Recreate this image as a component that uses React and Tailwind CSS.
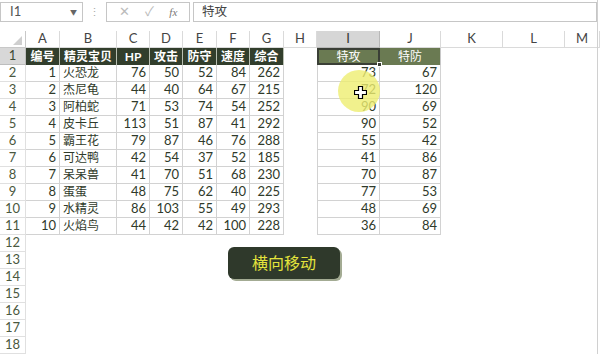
import React from 'react';

const cols = [
  { k: '', w: 26 },
  { k: 'A', w: 34 },
  { k: 'B', w: 57 },
  { k: 'C', w: 33 },
  { k: 'D', w: 33 },
  { k: 'E', w: 34 },
  { k: 'F', w: 33 },
  { k: 'G', w: 34 },
  { k: 'H', w: 33 },
  { k: 'I', w: 63 },
  { k: 'J', w: 61 },
  { k: 'K', w: 62 },
  { k: 'L', w: 62 },
  { k: 'M', w: 35 },
];

const head = ['编号', '精灵宝贝', 'HP', '攻击', '防守', '速度', '综合'];

const data = [
  [1, '火恐龙', 76, 50, 52, 84, 262, 73, 67],
  [2, '杰尼龟', 44, 40, 64, 67, 215, 72, 120],
  [3, '阿柏蛇', 71, 53, 74, 54, 252, 90, 69],
  [4, '皮卡丘', 113, 51, 87, 41, 292, 90, 52],
  [5, '霸王花', 79, 87, 46, 76, 288, 55, 42],
  [6, '可达鸭', 42, 54, 37, 52, 185, 41, 86],
  [7, '呆呆兽', 41, 70, 51, 68, 230, 70, 87],
  [8, '蛋蛋', 48, 75, 62, 40, 225, 77, 53],
  [9, '水精灵', 86, 103, 55, 49, 293, 48, 69],
  [10, '火焰鸟', 44, 42, 42, 100, 228, 36, 84],
];

const FONT = { fontFamily: 'Lato, "Noto Sans CJK SC", sans-serif' };

function FormulaBar() {
  return (
    <div className="h-[31px] flex items-start pt-[2px] text-[13px]">
      <div className="w-[83px] h-[20px] border border-[#c6c6c6] flex items-center justify-between pl-[9px] pr-[5px] text-[#555]">
        <span>I1</span>
        <span className="text-[7px] text-[#666]">▼</span>
      </div>
      <div className="w-[23px] h-[20px] flex items-center justify-center text-[#aaa] text-[11px]">⋮</div>
      <div className="w-[84px] h-[20px] border border-[#c6c6c6] flex items-center justify-around px-[4px] text-[#bbb]">
        <span className="text-[13px]">✕</span>
        <span className="text-[13px]">✓</span>
        <span className="text-[11px] italic text-[#777]" style={{ fontFamily: '"Liberation Serif", serif' }}>fx</span>
      </div>
      <div className="ml-[3px] w-[404px] h-[20px] border border-[#c6c6c6] flex items-center pl-[8px] text-[#444] text-[12.5px]">
        特攻
      </div>
    </div>
  );
}

function HeaderRow() {
  return (
    <>
      {cols.map((c, i) =>
        i === 0 ? (
          <div key={i} className="relative h-[17px] border-r border-b border-[#c8c8c8] bg-white">
            <div className="absolute right-[3px] bottom-[2px] w-0 h-0 border-l-[9px] border-l-transparent border-b-[9px] border-b-[#cfcfcf]" />
          </div>
        ) : (
          <div
            key={i}
            className={
              c.k === 'I'
                ? 'h-[17px] flex items-center justify-center bg-[#d6d6d6] border-r border-b border-[#b8b8b8] text-[#333] text-[13px]'
                : 'h-[17px] flex items-center justify-center bg-white border-r border-b border-[#dadada] text-[#444] text-[13px]'
            }
          >
            {c.k}
          </div>
        )
      )}
    </>
  );
}

function RowHead({ n }) {
  return (
    <div
      className={
        n === 1
          ? 'h-[17px] flex items-center justify-center bg-[#d8d8d8] border-r border-b border-[#bdbdbd] text-[#3c4a34] text-[13px]'
          : 'h-[17px] flex items-center justify-center bg-white border-r border-b border-[#e0e0e0] text-[#4a5840] text-[13px]'
      }
    >
      {n}
    </div>
  );
}

function Cell({ r, c }) {
  // r: sheet row number, c: column index into cols
  if (r === 1 && c >= 1 && c <= 7) {
    return (
      <div className="h-[17px] flex items-center justify-center bg-[#323e2c] border-r border-[#b9bfb2] text-white font-bold text-[12px]">
        {head[c - 1]}
      </div>
    );
  }
  if (r === 1 && c === 9) {
    return (
      <div className="relative h-[17px] flex items-center justify-center bg-[#6a7a52] border-2 border-[#3a3f36] text-white text-[12px]">
        特攻
        <div className="absolute -right-[4px] -bottom-[4px] w-[5px] h-[5px] bg-[#3a3f36] border border-white" />
      </div>
    );
  }
  if (r === 1 && c === 10) {
    return (
      <div className="h-[17px] flex items-center justify-center bg-[#6a7a52] border-r border-[#c8c8c8] text-white text-[12px]">
        特防
      </div>
    );
  }
  if (r >= 2 && r <= 11 && c >= 1 && c <= 7) {
    const v = data[r - 2][c - 1];
    return (
      <div
        className={
          c === 2
            ? 'h-[17px] flex items-center justify-start pl-[3px] border-r border-b border-[#d2d2d2] text-[#2f3a2a] text-[12px]'
            : 'h-[17px] flex items-center justify-end pr-[3px] border-r border-b border-[#d2d2d2] text-[#2f3a2a] text-[13px]'
        }
      >
        {v}
      </div>
    );
  }
  if (r >= 2 && r <= 11 && (c === 9 || c === 10)) {
    const v = data[r - 2][c === 9 ? 7 : 8];
    return (
      <div
        className={
          c === 9
            ? 'h-[17px] flex items-center justify-end pr-[3px] border-l border-r border-b border-[#d2d2d2] text-[#2f3a2a] text-[13px]'
            : 'h-[17px] flex items-center justify-end pr-[3px] border-r border-b border-[#d2d2d2] text-[#2f3a2a] text-[13px]'
        }
      >
        {v}
      </div>
    );
  }
  return <div className="h-[17px] bg-white" />;
}

export default function App() {
  const rows = Array.from({ length: 18 }, (_, i) => i + 1);
  return (
    <div className="relative w-[600px] h-[354px] overflow-hidden bg-white" style={FONT}>
      <FormulaBar />
      <div className="grid grid-cols-[26px_34px_57px_33px_33px_34px_33px_34px_33px_63px_61px_62px_62px_35px]">
        <HeaderRow />
        {rows.map((r) => (
          <React.Fragment key={r}>
            <RowHead n={r} />
            {cols.slice(1).map((_, j) => (
              <Cell key={j} r={r} c={j + 1} />
            ))}
          </React.Fragment>
        ))}
      </div>

      {/* right window edge */}
      <div className="absolute top-0 right-[2px] w-px h-full bg-[#d0d0d0]" />

      {/* click highlight */}
      <div className="absolute left-[338px] top-[70px] w-[42px] h-[42px] rounded-full bg-[#eeee70]/80" />
      <svg className="absolute left-[354px] top-[86px]" width="13" height="13" viewBox="0 0 13 13">
        <path d="M4.5 0.5h4v4h4v4h-4v4h-4v-4h-4v-4h4z" fill="#fff" stroke="#000" strokeWidth="1.2" />
      </svg>

      {/* shape button */}
      <div className="absolute left-[228px] top-[247px] w-[112px] h-[32px] rounded-[6px] bg-[#2f392b] shadow-[2px_2px_0_#a3ab93] flex items-center justify-center text-[#e4e43c] text-[16px]">
        横向移动
      </div>
    </div>
  );
}
